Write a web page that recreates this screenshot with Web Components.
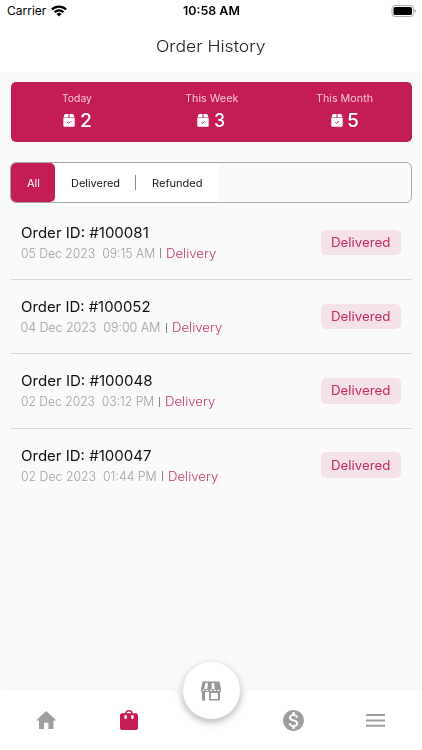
<!DOCTYPE html>
<html lang="en">
<head>
<meta charset="utf-8">
<title>Order History</title>
<style>
html,body{margin:0;height:100%;overflow:hidden}
body{font-family:Inter,"Open Sans",sans-serif;background:#fafafa}
</style>
</head>
<body>
<order-app></order-app>
<script>
// Single line of text stretched to a given width in pixels.
customElements.define('fit-text', class extends HTMLElement {
  connectedCallback() {
    const root = this.attachShadow({mode: 'open'});
    root.innerHTML = `<style>:host{display:block;flex:none;white-space:pre}span{display:inline-block;transform-origin:0 50%}</style><span><slot></slot></span>`;
    const w = +this.getAttribute('w'), span = root.querySelector('span');
    this.style.width = w + 'px';
    span.style.transform = `scaleX(${w / span.offsetWidth})`;
  }
});

function define(name, css, html) {
  customElements.define(name, class extends HTMLElement {
    connectedCallback() {
      const get = (k) => this.getAttribute(k) || '';
      this.attachShadow({mode: 'open'}).innerHTML = `<style>*{box-sizing:border-box}${css}</style>` + html(get);
    }
  });
}

define('status-bar', `
:host{display:flex;justify-content:space-between;align-items:center;height:22px;padding:0 5px 0 7px;color:#000;font-size:12px;line-height:22px;box-sizing:border-box}
.left,.right{width:110px;display:flex;align-items:center;gap:5px}.right{justify-content:flex-end}
.time{font-weight:600;margin-right:2px}svg{display:block}`, () => `
<div class="left"><fit-text w="39">Carrier</fit-text>
<svg width="16" height="12" viewBox="0 0 16 12"><g fill="none" stroke="#000" stroke-width="2.2"><path d="M.9 4.5a10 10 0 0 1 14.2 0"/><path d="M3.5 7.3a6.3 6.3 0 0 1 9 0"/></g><path d="M8 11.6 5.5 9a3.5 3.5 0 0 1 5 0z"/></svg></div>
<fit-text class="time" w="57">10:58 AM</fit-text>
<div class="right"><svg width="26" height="12" viewBox="0 0 26 12"><rect x="1" y=".5" width="21.5" height="11" rx="3" fill="#fff" stroke="#aaa"/><rect x="2.5" y="2" width="18.5" height="8" rx="1.6"/><path d="M23.6 4.2q1.6.5 1.6 1.8t-1.6 1.8z" fill="#aaa"/></svg></div>`);

define('title-bar', `
:host{display:flex;justify-content:center;height:50px;padding-top:12px;box-sizing:border-box;font-size:16px;line-height:24px;font-weight:300;color:#222}`,
() => `<fit-text w="110">Order History</fit-text>`);

define('stat-item', `
:host{display:flex;flex:1;flex-direction:column;align-items:center;color:#fff}
.label{font-size:10px;line-height:14px;color:#f6c9d8}
.value{display:flex;align-items:center;gap:4.5px;font-size:18.5px;font-weight:500;line-height:26px;margin-top:2px}
svg{display:block;margin-top:1px}`, a => `
<fit-text class="label" w="${a('w')}">${a('label')}</fit-text>
<div class="value"><svg width="12" height="13" viewBox="0 0 12 13"><path fill="#fff" d="M2.3 0h3.2v3.4H.5L1.5.6Q1.8 0 2.3 0zM6.5 0h3.2q.5 0 .8.6l1 2.8h-5zM.3 4.1h11.4v7.4q0 1.3-1.2 1.3h-9Q.3 12.8.3 11.5z"/><path d="m4.4 8.2 1.2 1.2 2.3-2.3" fill="none" stroke="#c41c55"/></svg><fit-text w="11.5">${a('value')}</fit-text></div>`);

define('stats-card', `
:host{display:flex;height:60px;margin:10px 10.5px 0;padding-top:9px;border-radius:5px;background:#c41c55;box-sizing:border-box}`,
() => `<stat-item label="Today" value="2" w="30"></stat-item><stat-item label="This Week" value="3" w="53"></stat-item><stat-item label="This Month" value="5" w="57"></stat-item>`);

define('filter-tabs', `
:host{display:flex;height:41px;margin:20px 10.4px 0;border:1px solid #a5a3ae;border-radius:6px;box-sizing:border-box;font-size:10.2px;font-weight:400;color:#111}
.tab{display:flex;align-items:center;justify-content:center;background:#fff;height:39px}
.all{width:44px;border-radius:5px;background:#c41c55;color:#fff;font-weight:400}
.d{width:80px}.r{width:83px}.sep{display:flex;align-items:center;background:#fff}.sep i{width:1px;height:15px;background:#888}`,
() => `<div class="tab all"><fit-text w="13">All</fit-text></div><div class="tab d"><fit-text w="49.5">Delivered</fit-text></div><div class="sep"><i></i></div><div class="tab r"><fit-text w="51">Refunded</fit-text></div>`);

define('order-row', `
:host{display:flex;align-items:center;justify-content:space-between;height:74.3px;margin:0 10.5px;padding:0 10.5px 0 10px;box-sizing:border-box;border-bottom:1px solid #d9d7de}
:host([last]){border-color:transparent}
.text{padding-top:1px}
.id{font-size:14.4px;line-height:21px;color:#111;font-weight:400}
.meta{display:flex;align-items:center;font-size:12.4px;line-height:21px;font-weight:300;color:#a0a0a0}
.bar{width:1px;height:10px;background:#888;margin:0 5px}
.type{color:#c43a6b;font-weight:300}
.badge{width:80.5px;height:25.5px;display:flex;align-items:center;justify-content:center;border-radius:5px;background:#f5e2e9;color:#c4285d;font-size:12.4px;font-weight:400}`,
a => `<div class="text"><fit-text class="id" w="${a('w')}">Order ID: #${a('number')}</fit-text>
<div class="meta"><fit-text w="${a('dw')}">${a('date')}</fit-text><i class="bar"></i><fit-text class="type" w="50">Delivery</fit-text></div></div>
<div class="badge"><fit-text w="59">Delivered</fit-text></div>`);

define('bottom-nav', `
:host{position:absolute;left:0;right:0;bottom:0;height:92px}
.bg{position:absolute;inset:0;display:block}
.items{position:absolute;inset:32px 5px 0;display:grid;grid-template-columns:repeat(5,1fr);justify-items:center;align-items:start;padding-top:18px}
.items svg{display:block}
.fab{position:absolute;left:182.5px;top:4px;width:57px;height:57px;border-radius:50%;background:#fff;box-shadow:0 3px 8px #0004;display:flex;align-items:center;justify-content:center}`,
() => `<svg class="bg" width="422" height="92" viewBox="0 0 422 92"><path fill="#fff" style="filter:drop-shadow(0 0 2px #0000000a)" d="M0 32H169Q178 32 180 41A32 32 0 0 0 242 41Q244 32 253 32H422V92H0z"/></svg>
<div class="items">
<svg width="24" height="24" viewBox="0 0 24 24" fill="#9e9e9e"><path d="M10 21v-6.3h4.4V21h5v-8.6h3L12.2 3 2 12.4h3V21z"/></svg>
<svg width="24" height="24" viewBox="0 0 24 24" fill="#c41c55"><path d="M5 5.2h3.1a4 4 0 0 1 7.8 0H19q2 0 2 2V20q0 2-2 2H5q-2 0-2-2V7.2q0-2 2-2zm4.6 0h4.8a2.5 2.5 0 0 0-4.8 0zM7.4 7.2v2.5a1.2 1.2 0 0 0 2.4 0V7.2zm6.8 0v2.5a1.2 1.2 0 0 0 2.4 0V7.2z" fill-rule="evenodd"/></svg>
<span></span>
<svg width="25" height="25" viewBox="0 0 24 24" fill="#9e9e9e"><path d="M12 2C6.48 2 2 6.48 2 12s4.48 10 10 10 10-4.48 10-10S17.52 2 12 2zm1.41 16.09V20h-2.67v-1.93c-1.71-.36-3.16-1.46-3.27-3.4h1.96c.1 1.05.82 1.87 2.65 1.87 1.96 0 2.4-.98 2.4-1.59 0-.83-.44-1.61-2.67-2.14-2.48-.6-4.18-1.62-4.18-3.67 0-1.72 1.39-2.84 3.11-3.21V4h2.67v1.95c1.86.45 2.79 1.86 2.85 3.39H14.3c-.05-1.11-.64-1.87-2.22-1.87-1.5 0-2.4.68-2.4 1.64 0 .84.65 1.39 2.67 1.91s4.18 1.39 4.18 3.91c-.01 1.83-1.38 2.83-3.12 3.16z"/></svg>
<svg width="24" height="24" viewBox="0 0 24 24" fill="#9e9e9e"><path d="M2 6h19v2H2zm0 5.4h19v2H2zm0 5.4h19v2H2z"/></svg>
</div>
<div class="fab"><svg width="20" height="20" viewBox="0 0 20 20" fill="#969696"><path fill-rule="evenodd" d="M1.5.5h17L20 8v2q0 1-1 1v8.5H8.2V11H4v8.5H1V11q-1 0-1-1V8zm3 1.4L3.2 8h3L7 1.9zm6.2 0V8h3l-.5-6.1zM1.4 8.8v1.3h2.1V8.8zm3.7 0v1.3h2.2V8.8zm3.8 0v1.3h2.2V8.8zm3.8 0v1.3h2.2V8.8zm3.8 0v1.3h2.1V8.8zM10 12v6h7v-6z"/></svg></div>`);

define('order-app', `
:host{display:block;position:relative;width:422px;height:750px;overflow:hidden;background:#fafafa}
header{background:#fff;height:72px}main{display:flex;flex-direction:column}
.list{margin-top:2.7px}`, () => `
<header><status-bar></status-bar><title-bar></title-bar></header>
<main><stats-card></stats-card><filter-tabs></filter-tabs><div class="list">
<order-row number="100081" w="127.5" date="05 Dec 2023  09:15 AM" dw="134"></order-row>
<order-row number="100052" w="129.5" date="04 Dec 2023  09:00 AM" dw="140"></order-row>
<order-row number="100048" w="132" date="02 Dec 2023  03:12 PM" dw="133"></order-row>
<order-row last number="100047" w="130.5" date="02 Dec 2023  01:44 PM" dw="136"></order-row>
</div></main><bottom-nav></bottom-nav>`);
</script>
</body>
</html>
